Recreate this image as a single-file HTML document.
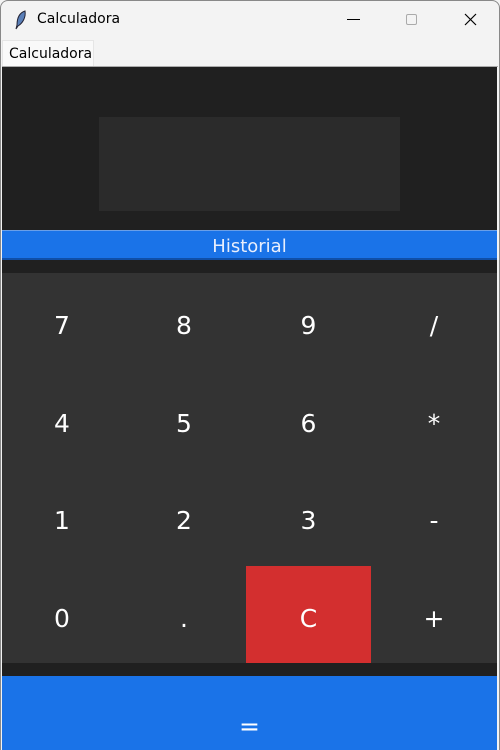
<!DOCTYPE html><html><head><style>
html,body{margin:0;width:500px;height:750px;overflow:hidden}
body{background:#f3f3f3;font-family:"Segoe UI","DejaVu Sans","Liberation Sans",sans-serif;position:relative}
div{position:absolute;box-sizing:border-box}
.k{color:#fff;font-size:25px;display:flex;align-items:center;justify-content:center;height:97.5px;padding-top:8px}
</style></head><body>
<div style="left:0;top:0;width:500px;height:40px;background:#f3f3f3;border:1px solid #888;border-bottom:none;border-radius:8px 8px 0 0"></div>
<svg style="position:absolute;left:14px;top:10px" width="14" height="20"><path d="M11 1 C5 3 3 9 3 15 L2 19 L4 16 C9 13 12 7 11 1Z" fill="#5a7fb8" stroke="#223" stroke-width="1"/></svg>
<div style="left:37px;top:11px;font-size:14px;color:#000">Calculadora</div>
<div style="left:347px;top:19px;width:13px;height:1px;background:#000"></div>
<div style="left:406px;top:14px;width:11px;height:11px;border:1px solid #aaa;border-radius:2px"></div>
<svg style="position:absolute;left:464px;top:13px" width="13" height="13"><path d="M1 1L12 12M12 1L1 12" stroke="#000" stroke-width="1.2"/></svg>
<div style="left:0;top:40px;width:1px;height:710px;background:#888"></div>
<div style="left:499px;top:40px;width:1px;height:710px;background:#888"></div>
<div style="left:2px;top:40px;width:92px;height:27px;background:#f9f9f9;border:1px solid #e5e5e5;border-bottom:none;font-size:14px;padding:5px 0 0 6px;color:#000">Calculadora</div>
<div style="left:2px;top:66px;width:496px;height:1px;background:#aaa"></div>
<div style="left:2px;top:67px;width:495px;height:683px;background:#202020"></div>
<div style="left:99px;top:117px;width:301px;height:94px;background:#2b2b2b"></div>
<div style="left:2px;top:230px;width:495px;height:30px;background:#1a73e8;border-top:1px solid #6a9fe8;border-bottom:2px solid #0f4fa8;color:#e8eefc;font-size:18px;text-align:center;line-height:31px">Historial</div>
<div style="left:2px;top:273px;width:495px;height:390px;background:#333"></div>
<div style="left:246px;top:565.5px;width:125px;height:97.5px;background:#d32f2f"></div>
<div class="k" style="left:2px;top:273px;width:120px">7</div><div class="k" style="left:122px;top:273px;width:124px">8</div><div class="k" style="left:246px;top:273px;width:125px">9</div><div class="k" style="left:371px;top:273px;width:126px">/</div>
<div class="k" style="left:2px;top:370.5px;width:120px">4</div><div class="k" style="left:122px;top:370.5px;width:124px">5</div><div class="k" style="left:246px;top:370.5px;width:125px">6</div><div class="k" style="left:371px;top:370.5px;width:126px">*</div>
<div class="k" style="left:2px;top:468px;width:120px">1</div><div class="k" style="left:122px;top:468px;width:124px">2</div><div class="k" style="left:246px;top:468px;width:125px">3</div><div class="k" style="left:371px;top:468px;width:126px">-</div>
<div class="k" style="left:2px;top:565.5px;width:120px">0</div><div class="k" style="left:122px;top:565.5px;width:124px">.</div><div class="k" style="left:246px;top:565.5px;width:125px">C</div><div class="k" style="left:371px;top:565.5px;width:126px">+</div>
<div style="left:2px;top:676px;width:495px;height:74px;background:#1a73e8"></div>
<div style="left:2px;top:712px;width:495px;height:30px;color:#fff;font-size:25px;text-align:center;line-height:30px">=</div>
</body></html>
